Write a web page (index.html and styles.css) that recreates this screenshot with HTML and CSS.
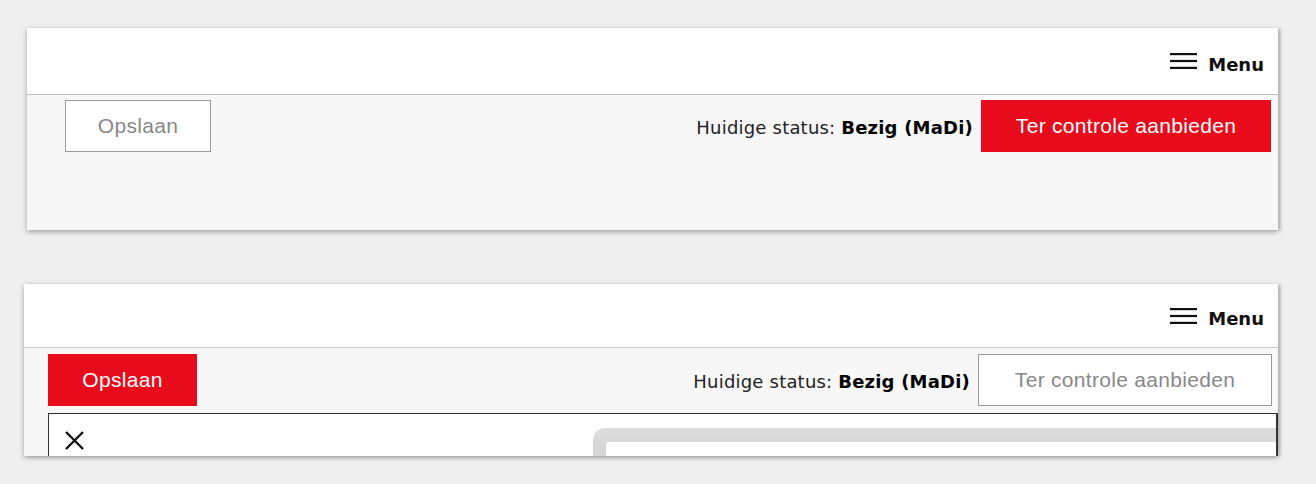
FILE: index.html
```html
<!DOCTYPE html>
<html lang="nl">
<head>
<meta charset="utf-8">
<title>Status</title>
<link rel="stylesheet" href="styles.css">
</head>
<body>
<div class="page">
  <section class="card card-a">
    <header class="topbar">
      <button class="menu" type="button">
        <svg class="burger" width="27" height="16" viewBox="0 0 27 16"><rect x="0" y="0" width="27" height="2.2" fill="#111"/><rect x="0" y="6.9" width="27" height="2.2" fill="#111"/><rect x="0" y="13.8" width="27" height="2.2" fill="#111"/></svg>
        <span>Menu</span>
      </button>
    </header>
    <div class="toolbar toolbar-a">
      <button class="btn btn-outline btn-save-a" type="button">Opslaan</button>
      <div class="right">
        <span class="status">Huidige status: <b>Bezig (MaDi)</b></span>
        <button class="btn btn-red btn-submit-a" type="button">Ter controle aanbieden</button>
      </div>
    </div>
  </section>

  <section class="card card-b">
    <header class="topbar topbar-b">
      <button class="menu" type="button">
        <svg class="burger" width="27" height="16" viewBox="0 0 27 16"><rect x="0" y="0" width="27" height="2.2" fill="#111"/><rect x="0" y="6.9" width="27" height="2.2" fill="#111"/><rect x="0" y="13.8" width="27" height="2.2" fill="#111"/></svg>
        <span>Menu</span>
      </button>
    </header>
    <div class="toolbar toolbar-b">
      <button class="btn btn-red btn-save-b" type="button">Opslaan</button>
      <div class="right">
        <span class="status">Huidige status: <b>Bezig (MaDi)</b></span>
        <button class="btn btn-outline btn-submit-b" type="button">Ter controle aanbieden</button>
      </div>
    </div>
    <div class="dialog">
      <button class="close" type="button" aria-label="Sluiten">
        <svg width="21" height="21" viewBox="0 0 21 21"><path d="M2 2 L19 19 M19 2 L2 19" stroke="#111" stroke-width="2.4" fill="none"/></svg>
      </button>
      <div class="panel"><div class="panel-inner"></div></div>
    </div>
  </section>
</div>
</body>
</html>
```

FILE: styles.css
```css
* { box-sizing: border-box; }
html, body { margin: 0; padding: 0; }
body {
  background: #efefef;
  width: 1316px;
  height: 484px;
  overflow: hidden;
  font-family: "DejaVu Sans", Verdana, sans-serif;
}
.page {
  display: flex;
  flex-direction: column;
  padding-top: 28px;
}
.card {
  background: #f7f7f7;
  box-shadow: 0 2px 5px rgba(0,0,0,0.32), 3px 0 2px rgba(0,0,0,0.12);
  overflow: hidden;
  display: flex;
  flex-direction: column;
}
.card-a {
  margin-left: 27px;
  width: 1251px;
  height: 202px;
}
.card-b {
  margin-left: 24px;
  margin-top: 54px;
  width: 1254px;
  height: 172px;
}
.topbar {
  background: #fff;
  height: 67px;
  border-bottom: 1px solid #bdbdbd;
  display: flex;
  justify-content: flex-end;
  align-items: center;
  padding-right: 14px;
}
.topbar-b { height: 64px; border-bottom-color: #cfcfcf; }
.menu {
  border: 0;
  background: none;
  padding: 0;
  display: flex;
  align-items: center;
  gap: 11px;
  font-family: "DejaVu Sans", Verdana, sans-serif;
  font-weight: bold;
  font-size: 18px;
  color: #111;
}
.menu span { padding-top: 6px; }
.burger { display: block; }
.toolbar {
  display: flex;
  justify-content: space-between;
  align-items: center;
}
.toolbar-a { padding: 5px 7px 0 38px; }
.toolbar-b { padding: 6px 6px 0 24px; }
.right {
  display: flex;
  align-items: center;
  gap: 8px;
}
.status {
  font-size: 18px;
  letter-spacing: 0.2px;
  color: #222;
  padding-top: 3px;
}
.status b { color: #000; }
.btn {
  height: 52px;
  font-family: "Liberation Sans", Arial, sans-serif;
  font-size: 21px;
  letter-spacing: 0.3px;
  cursor: pointer;
  padding: 0;
}
.btn-outline {
  background: #fff;
  border: 1px solid #9a9a9a;
  color: #888;
}
.btn-red {
  background: #e80b1b;
  border: 0;
  color: #fff;
}
.btn-save-a { width: 146px; }
.btn-submit-a { width: 290px; }
.btn-save-b { width: 149px; }
.btn-submit-b { width: 294px; }
.dialog {
  margin: 7px 0 0 24px;
  flex: 1;
  background: #fff;
  border: 1.5px solid #333;
  border-right-width: 2px;
  border-bottom: 0;
  display: flex;
  align-items: flex-start;
  min-height: 0;
}
.close {
  border: 0;
  background: none;
  padding: 0;
  margin: 16px 0 0 15px;
  display: block;
}
.close svg { display: block; }
.panel {
  margin: 14px 0 0 508px;
  flex: 1;
  height: 40px;
  background: linear-gradient(#dcdcdc, #d2d2d2);
  border-radius: 12px 0 0 0;
  padding: 14px 0 0 13px;
}
.panel-inner {
  background: #fff;
  height: 30px;
  border-radius: 3px 0 0 0;
}
```
